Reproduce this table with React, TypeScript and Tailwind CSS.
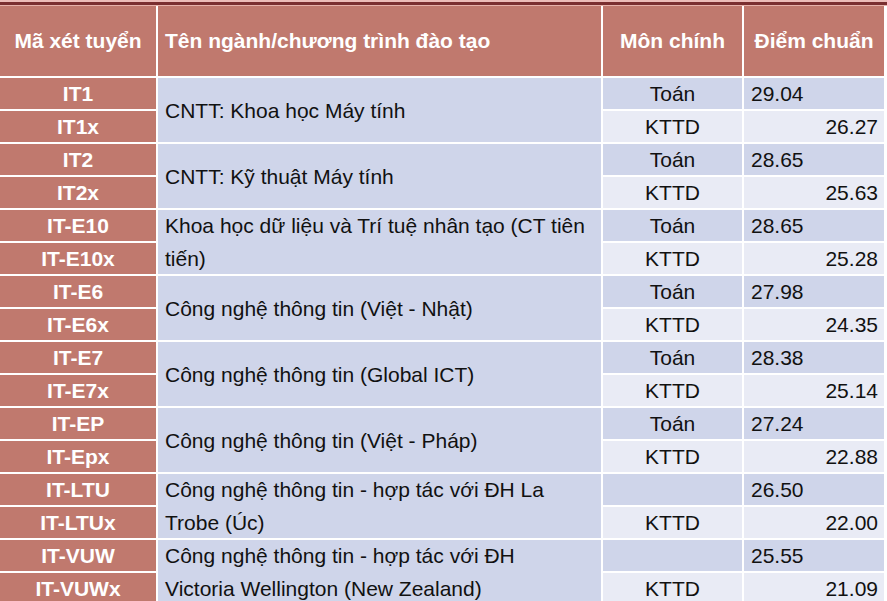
const groups = [
  { codes: ["IT1", "IT1x"], name: ["CNTT: Khoa học Máy tính"], mon: ["Toán", "KTTD"], diem: ["29.04", "26.27"] },
  { codes: ["IT2", "IT2x"], name: ["CNTT: Kỹ thuật Máy tính"], mon: ["Toán", "KTTD"], diem: ["28.65", "25.63"] },
  {
    codes: ["IT-E10", "IT-E10x"],
    name: ["Khoa học dữ liệu và Trí tuệ nhân tạo (CT tiên", "tiến)"],
    mon: ["Toán", "KTTD"],
    diem: ["28.65", "25.28"],
  },
  { codes: ["IT-E6", "IT-E6x"], name: ["Công nghệ thông tin (Việt - Nhật)"], mon: ["Toán", "KTTD"], diem: ["27.98", "24.35"] },
  { codes: ["IT-E7", "IT-E7x"], name: ["Công nghệ thông tin (Global ICT)"], mon: ["Toán", "KTTD"], diem: ["28.38", "25.14"] },
  { codes: ["IT-EP", "IT-Epx"], name: ["Công nghệ thông tin (Việt - Pháp)"], mon: ["Toán", "KTTD"], diem: ["27.24", "22.88"] },
  {
    codes: ["IT-LTU", "IT-LTUx"],
    name: ["Công nghệ thông tin - hợp tác với ĐH La", "Trobe (Úc)"],
    mon: ["", "KTTD"],
    diem: ["26.50", "22.00"],
  },
  {
    codes: ["IT-VUW", "IT-VUWx"],
    name: ["Công nghệ thông tin - hợp tác với ĐH", "Victoria Wellington (New Zealand)"],
    mon: ["", "KTTD"],
    diem: ["25.55", "21.09"],
  },
];

export default function App() {
  return (
    <div className="h-[601px] w-[887px] overflow-hidden bg-white font-['Liberation_Sans',Arial,sans-serif] text-[21px]">
      {/* top rule */}
      <div className="h-[2px] bg-[#ecbcb8]" />
      <div className="h-[3px] bg-[#7a2f30]" />
      <div className="h-[1px] bg-[#e7b1aa]" />

      <div className="grid w-[884px] grid-cols-[156px_443px_139px_140px] grid-rows-[70px] auto-rows-[31px] gap-[2px] bg-white">
        {/* Header */}
        <div className="flex items-center justify-center bg-[#c0796e] font-bold text-white">Mã xét tuyển</div>
        <div className="flex items-center bg-[#c0796e] pl-[7px] font-bold text-white">Tên ngành/chương trình đào tạo</div>
        <div className="flex items-center justify-center bg-[#c0796e] font-bold text-white">Môn chính</div>
        <div className="flex items-center justify-center bg-[#c0796e] font-bold text-white">Điểm chuẩn</div>

        {groups.map((g) => [
          <div key={g.codes[0]} className="flex items-center justify-center bg-[#c0796e] font-bold text-white">
            {g.codes[0]}
          </div>,
          <div
            key={g.codes[0] + "-name"}
            className="row-span-2 flex flex-col justify-center bg-[#cfd5ea] pl-[7px] leading-[33px] text-[#111]"
          >
            {g.name.map((line) => (
              <span key={line} className="whitespace-nowrap">
                {line}
              </span>
            ))}
          </div>,
          <div key={g.codes[0] + "-mon"} className="flex items-center justify-center bg-[#cfd5ea] text-[#111]">
            {g.mon[0]}
          </div>,
          <div key={g.codes[0] + "-diem"} className="flex items-center bg-[#cfd5ea] pl-[7px] text-[#111]">
            {g.diem[0]}
          </div>,
          <div key={g.codes[1]} className="flex items-center justify-center bg-[#c0796e] font-bold text-white">
            {g.codes[1]}
          </div>,
          <div key={g.codes[1] + "-mon"} className="flex items-center justify-center bg-[#e9ebf5] text-[#111]">
            {g.mon[1]}
          </div>,
          <div key={g.codes[1] + "-diem"} className="flex items-center justify-end bg-[#e9ebf5] pr-[6px] text-[#111]">
            {g.diem[1]}
          </div>,
        ])}
      </div>
    </div>
  );
}
